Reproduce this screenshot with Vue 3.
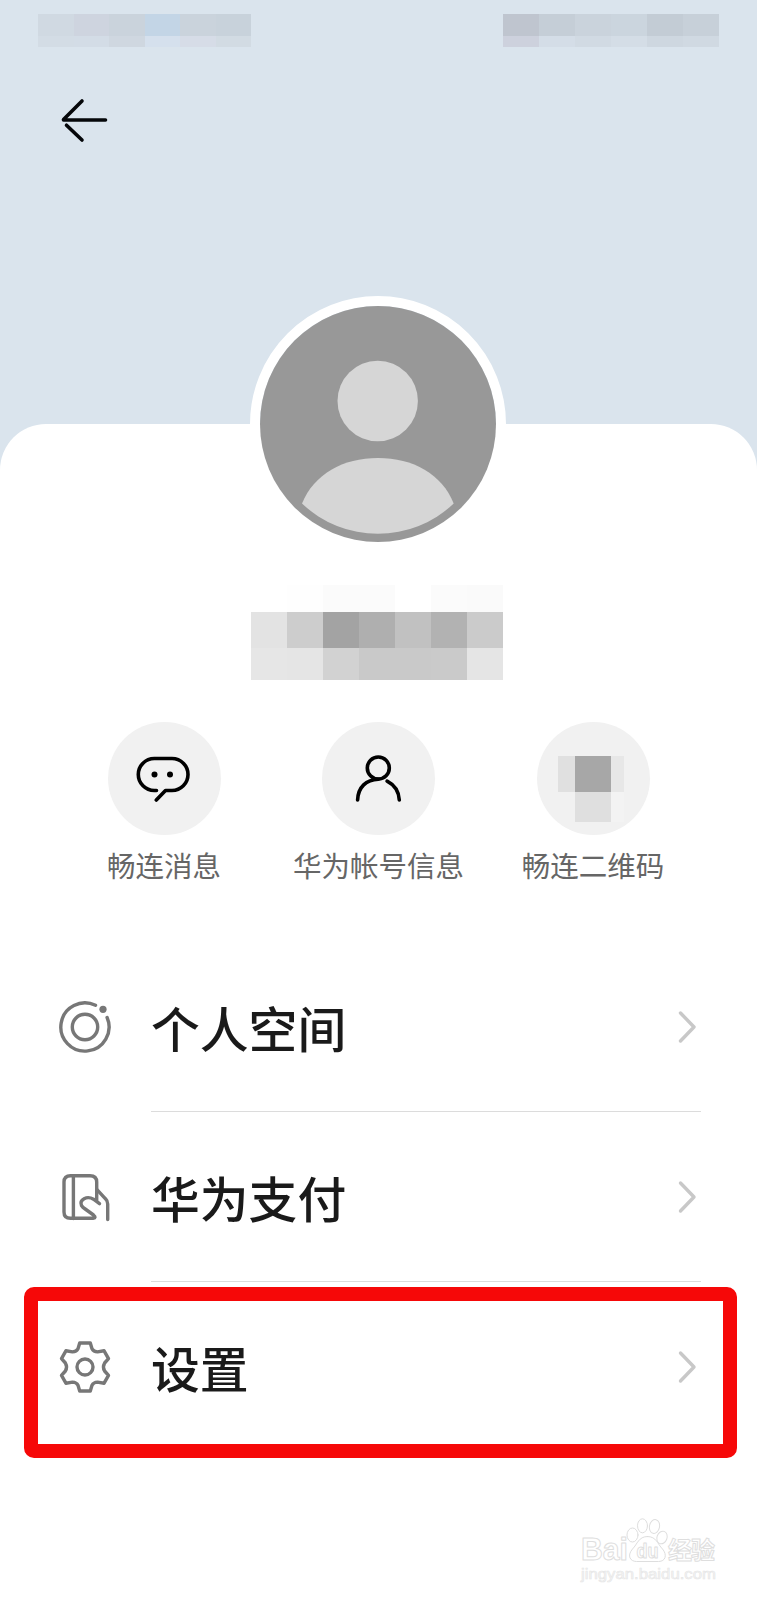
<template>
  <div class="page">
    <!-- Header -->
    <header class="header">
      <div class="status-bar">
        <div class="mosaic status-left">
          <span v-for="(c, i) in statusLeft" :key="i" :style="{ background: c }"></span>
        </div>
        <div class="mosaic status-right">
          <span v-for="(c, i) in statusRight" :key="i" :style="{ background: c }"></span>
        </div>
      </div>
      <button class="back" aria-label="back">
        <svg width="48" height="46" viewBox="0 0 48 46">
          <path d="M22 3 L3.500 21.500 M3.500 22 H45.500 M6.500 27.200 L22 42" />
        </svg>
      </button>
    </header>

    <!-- Profile sheet -->
    <main class="sheet">
      <div class="avatar">
        <svg width="236" height="236" viewBox="0 0 236 236">
          <circle cx="118" cy="118" r="118" fill="#989898" />
          <circle cx="117.7" cy="95" r="40.2" fill="#d6d6d6" />
          <path d="M42 197.500 C54 168 83 152 118 152 C153 152 182 168 193.700 197.500 A110 110 0 0 1 42 197.500 Z" fill="#d6d6d6" />
        </svg>
      </div>

      <div class="mosaic name">
        <span v-for="(c, i) in nameCells" :key="i" :style="{ background: c }"></span>
      </div>

      <div class="actions">
        <div v-for="item in actions" :key="item.key" class="action">
          <div class="action-icon">
            <svg v-if="item.key === 'message'" width="56" height="56" viewBox="0 0 56 56">
              <path d="M20.500 39.500 H18.300 A16 16 0 0 1 18.300 7.500 H36 A16 16 0 0 1 36 39.500 H29.500 L20.300 49" />
              <circle class="dot" cx="18.500" cy="23.500" r="3" />
              <circle class="dot" cx="34" cy="23.500" r="3" />
            </svg>
            <svg v-else-if="item.key === 'account'" width="56" height="56" viewBox="0 0 56 56">
              <circle cx="27.300" cy="17" r="11" />
              <path d="M6.600 49 C7.100 36 15.300 28.600 27.300 28.200 M36.100 30.100 C43.800 34 47.800 40 48.300 49" />
            </svg>
            <div v-else class="mosaic qr">
              <span v-for="(c, i) in qrCells" :key="i" :style="{ background: c }"></span>
            </div>
          </div>
          <span class="action-label">{{ item.label }}</span>
        </div>
      </div>

      <ul class="menu">
        <li v-for="item in menu" :key="item.key" class="menu-row" :class="{ marked: item.marked }">
          <svg class="menu-icon" width="52" height="52" viewBox="0 0 52 52">
            <template v-if="item.key === 'space'">
              <circle cx="26" cy="26" r="12.700" />
              <path d="M36.500 4.300 A24.100 24.100 0 1 0 48.100 16.500" />
              <circle class="dot" cx="44" cy="8.300" r="3.600" />
            </template>
            <template v-else-if="item.key === 'pay'">
              <path d="M14.400 4.700 V47.500" />
              <path d="M40.500 32.700 L34.500 28.200 C28 24.400 20 28.500 22.500 34.500 Q23.700 36.300 25.500 37.500 L34.500 44 Q37.800 46.600 34 47.300 H11.500 Q5 47.300 5 41 V11 Q5 4.700 11.500 4.700 H31 Q37.700 4.700 37.700 11 V30" />
              <path d="M38 18.700 L46.500 27.800 Q48.700 30 48.700 33 V48.500" />
            </template>
            <template v-else>
              <circle cx="26" cy="26" r="8" />
              <path d="M20.700 2 H31.300 L33 7.800 Q34.500 10.700 38.500 10.900 L45.100 9.800 L49.500 17.600 L45.600 22 Q43.300 26 45.600 30 L49.500 34.400 L45.100 42.200 L38.500 41.100 Q34.500 41.300 33 44.200 L31.300 50 H20.700 L19 44.200 Q17.500 41.300 13.500 41.100 L6.900 42.200 L2.500 34.400 L6.400 30 Q8.700 26 6.400 22 L2.500 17.600 L6.900 9.800 L13.500 10.900 Q17.500 10.700 19 7.800 Z" />
            </template>
          </svg>
          <div class="menu-body">
            <span class="menu-label">{{ item.label }}</span>
            <svg class="chevron" width="20" height="34" viewBox="0 0 20 34">
              <path d="M3.500 3 L17 17 L3.500 31" />
            </svg>
          </div>
        </li>
      </ul>
    </main>

    <svg class="watermark" width="150" height="70" viewBox="0 0 150 70">
      <text x="4" y="40" font-size="31" font-weight="700" textLength="47" lengthAdjust="spacingAndGlyphs">Bai</text>
      <ellipse cx="55.500" cy="15" rx="5.500" ry="7" />
      <ellipse cx="65.500" cy="5.800" rx="5" ry="7" />
      <ellipse cx="77.500" cy="6.500" rx="5" ry="7" transform="rotate(12 77.500 6.500)" />
      <ellipse cx="85" cy="17.500" rx="5" ry="6.500" transform="rotate(20 85 17.500)" />
      <path d="M70.500 16.500 C61.500 16.500 60.500 24 55.500 29 C49.500 36 53.500 41.500 59.500 41.500 H81.500 C88.500 41.500 90.500 35 85.500 29 C80.500 24 79.500 16.500 70.500 16.500 Z" />
      <text x="59.500" y="37.500" font-size="20" font-weight="700" textLength="22" lengthAdjust="spacingAndGlyphs">du</text>
      <text class="cjk" x="91" y="38.500" font-size="24" font-weight="700" textLength="47">经验</text>
      <text class="url" x="4" y="59" font-size="15" textLength="135" lengthAdjust="spacingAndGlyphs">jingyan.baidu.com</text>
    </svg>
  </div>
</template>

<script setup>
// Blurred-out blocks, listed row by row
const statusLeft = [
  '#d0d9e2', '#ced4df', '#cad3dc', '#c3d5e6', '#cad3dc', '#c8d2db',
  '#d3dce5', '#d3dce6', '#cfd7e0', '#d5e0ed', '#d6dce7', '#d2dbe3'
]

const statusRight = [
  '#bfc5cf', '#c5ced7', '#cad3dc', '#cbd5de', '#c3ccd5', '#c7d0d9',
  '#cdd1dd', '#d4dde7', '#d1dae3', '#d4dde6', '#ced7e0', '#d0d9e2'
]

const nameCells = [
  '#fff', '#fefefe', '#fbfbfb', '#fbfbfb', '#fff', '#fbfbfb', '#fafafa',
  '#e3e3e3', '#cdcdcd', '#a3a3a3', '#afafaf', '#c1c1c1', '#b2b2b2', '#cbcbcb',
  '#e6e6e6', '#e5e5e5', '#d2d2d2', '#c9c9c9', '#c9c9c9', '#cacaca', '#e5e5e5'
]

const qrCells = ['#e0e0e0', '#a7a7a7', '#e7e7e7', '#f1f1f1', '#dfdfdf', '#f3f3f3']

const actions = [
  { key: 'message', label: '畅连消息' },
  { key: 'account', label: '华为帐号信息' },
  { key: 'qrcode', label: '畅连二维码' }
]

const menu = [
  { key: 'space', label: '个人空间' },
  { key: 'pay', label: '华为支付' },
  { key: 'settings', label: '设置', marked: true }
]
</script>

<style>
body {
  margin: 0;
  background: #fff;
}
</style>

<style scoped>
.page {
  position: relative;
  width: 757px;
  height: 1600px;
  overflow: hidden;
  background: #dae4ed;
  font-family: "Noto Sans CJK SC", sans-serif;
}

svg {
  display: block;
  fill: none;
  stroke-linecap: round;
  stroke-linejoin: round;
}

.mosaic {
  display: grid;
}

/* Header */
.header {
  height: 424px;
  box-sizing: border-box;
  padding-top: 14px;
}

.status-bar {
  display: flex;
  justify-content: space-between;
  padding: 0 38px;
}

.status-left {
  width: 213px;
  grid-template: 22px 11px / repeat(6, 1fr);
}

.status-right {
  width: 216px;
  grid-template: 22px 11px / repeat(6, 1fr);
}

.back {
  display: block;
  margin: 51px 0 0 60px;
  padding: 0;
  border: 0;
  background: none;
}

.back path {
  stroke: #05070a;
  stroke-width: 3.6;
}

/* Sheet */
.sheet {
  display: flex;
  flex-direction: column;
  align-items: center;
  height: 1176px;
  border-radius: 46px 46px 0 0;
  background: #fff;
}

.avatar {
  margin-top: -128px;
  margin-right: 1px;
  border: 10px solid #fff;
  border-radius: 50%;
}

.name {
  margin-top: 33px;
  margin-right: 3px;
  width: 252px;
  grid-template: 27px 36px 32px / repeat(7, 1fr);
}

/* Actions */
.actions {
  display: grid;
  grid-template-columns: repeat(3, 214.5px);
  margin-top: 42px;
}

.action {
  display: flex;
  flex-direction: column;
  align-items: center;
}

.action-icon {
  display: flex;
  align-items: center;
  justify-content: center;
  width: 113px;
  height: 113px;
  border-radius: 50%;
  background: #f1f1f1;
}

.action-icon path,
.action-icon circle {
  stroke: #000;
  stroke-width: 3.6;
}

.action-icon .dot {
  fill: #000;
  stroke: none;
}

.qr {
  grid-template: 36px 30px / 17px 36px 13px;
  margin: 21px 4px 0 0;
}

.action-label {
  margin-top: 9px;
  line-height: 42px;
  font-size: 28.5px;
  white-space: nowrap;
  color: #666;
}

/* Menu */
.menu {
  width: 100%;
  margin: 56px 0 0;
  padding: 0;
  list-style: none;
}

.menu-row {
  position: relative;
  display: flex;
  align-items: center;
  height: 170px;
  padding: 0 56px 0 58.5px;
}

.menu-icon path,
.menu-icon circle {
  stroke: #777;
  stroke-width: 3.4;
}

.menu-icon .dot {
  fill: #777;
  stroke: none;
}

.menu-body {
  flex: 1;
  display: flex;
  align-items: center;
  justify-content: space-between;
  box-sizing: border-box;
  height: 100%;
  margin-left: 40.5px;
  padding-right: 4px;
  border-bottom: 1px solid #dcdcdc;
}

.menu-row:last-child .menu-body {
  border-bottom: 0;
}

.menu-label {
  font-size: 48.8px;
  font-weight: 500;
  line-height: 70px;
  color: #1a1a1a;
}

.chevron path {
  stroke: #c8c8c8;
  stroke-width: 3.4;
}

/* Red frame drawn over the highlighted row */
.marked::after {
  content: "";
  position: absolute;
  left: 24px;
  right: 20px;
  top: 5px;
  height: 171px;
  box-sizing: border-box;
  border: 14.5px solid #f60808;
  border-radius: 10px;
}

.watermark {
  position: absolute;
  left: 577px;
  top: 1520px;
  overflow: visible;
  font-family: "Liberation Sans", "Noto Sans CJK SC", sans-serif;
  fill: #fff;
  stroke: #dedede;
  stroke-width: 1;
}

.watermark .cjk {
  font-family: "Noto Sans CJK SC", sans-serif;
}

.watermark .url {
  fill: #f6f6f6;
  stroke: #e6e6e6;
  stroke-width: 0.6;
}
</style>
